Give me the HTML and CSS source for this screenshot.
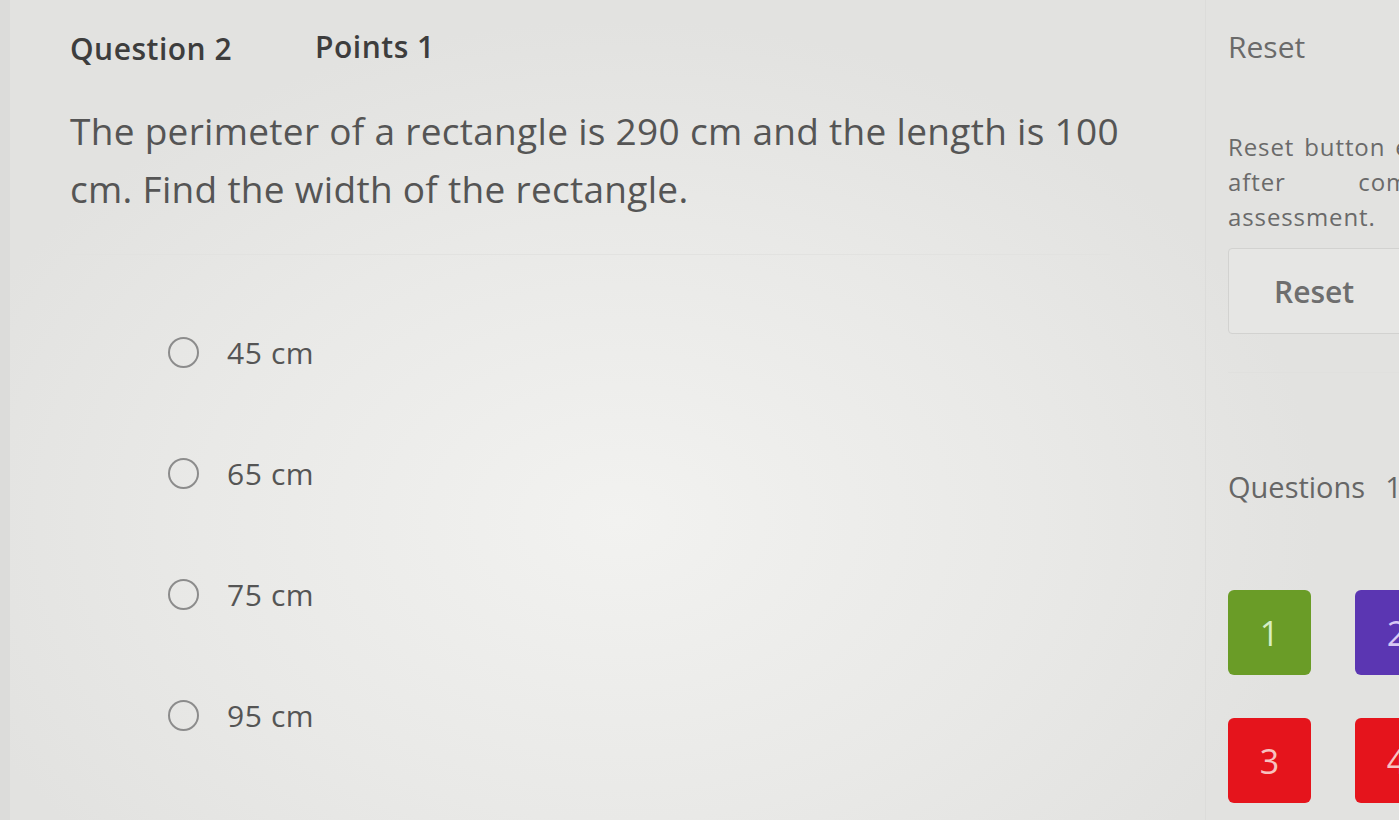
FILE: index.html
```html
<!DOCTYPE html>
<html>
<head>
<meta charset="utf-8">
<link rel="stylesheet" href="styles.css">
</head>
<body>
<div class="page">
  <main class="main">
    <div class="qhead">
      <span class="qnum">Question 2</span>
      <span class="qpts">Points 1</span>
    </div>
    <p class="qtext">The perimeter of a rectangle is 290 cm and the length is 100 cm. Find the width of the rectangle.</p>
    <div class="sep"></div>
    <ul class="options">
      <li class="opt"><span class="radio"></span><span class="label">45 cm</span></li>
      <li class="opt"><span class="radio"></span><span class="label">65 cm</span></li>
      <li class="opt"><span class="radio"></span><span class="label">75 cm</span></li>
      <li class="opt"><span class="radio"></span><span class="label">95 cm</span></li>
    </ul>
  </main>
  <aside class="side">
    <div class="side-title">Reset</div>
    <p class="side-note">Reset button enabled after completing assessment.</p>
    <button class="reset-btn">Reset</button>
    <div class="side-sep"></div>
    <div class="q-title"><span>Questions</span><span>1-4</span></div>
    <div class="tiles">
      <div class="tile green">1</div>
      <div class="tile purple">2</div>
      <div class="tile red">3</div>
      <div class="tile red">4</div>
    </div>
  </aside>
</div>
</body>
</html>
```

FILE: styles.css
```css
html, body {
  margin: 0;
  padding: 0;
  width: 1399px;
  height: 820px;
  overflow: hidden;
}
body {
  font-family: "Open Sans", "Noto Sans", sans-serif;
  background: radial-gradient(ellipse 700px 500px at 620px 520px, #f2f2f0 0%, #e9e9e7 60%, #e2e2e0 100%);
  color: #555;
}
.page {
  display: grid;
  grid-template-columns: 1195px 300px;
  height: 820px;
  border-left: 10px solid #dcdcda;
  box-sizing: border-box;
}
.main {
  padding: 26px 0 0 60px;
}
.qhead {
  display: flex;
  gap: 83px;
  align-items: flex-start;
  line-height: 41px;
}
.qnum {
  font-size: 30px;
  font-weight: 600;
  letter-spacing: 0.5px;
  color: #3d3d3d;
  padding-top: 2px;
}
.qpts {
  font-size: 30px;
  font-weight: 600;
  letter-spacing: 0.5px;
  color: #3d3d3d;
}
.qtext {
  margin: 33px 0 0 0;
  width: 1110px;
  font-size: 37px;
  letter-spacing: 0.3px;
  line-height: 58px;
  color: #555;
}
.sep {
  margin-top: 36px;
  width: 1040px;
  height: 1px;
  background: #e2e2e0;
}
.options {
  list-style: none;
  margin: 78px 0 0 0;
  padding: 0 0 0 98px;
  display: flex;
  flex-direction: column;
  gap: 83px;
}
.opt {
  display: flex;
  align-items: center;
  height: 38px;
}
.radio {
  width: 31px;
  height: 31px;
  border: 2px solid #8c8c8c;
  border-radius: 50%;
  box-sizing: border-box;
  margin-right: 28px;
}
.label {
  font-size: 30px;
  letter-spacing: 0.6px;
  color: #555;
}
.side {
  border-left: 1px solid #dcdcda;
  padding: 26px 0 0 22px;
  overflow: hidden;
}
.side-title {
  font-size: 30px;
  line-height: 41px;
  color: #6a6a6a;
}
.side-note {
  margin: 62px 0 0 0;
  width: 264px;
  font-size: 24px;
  line-height: 35px;
  text-align: justify;
  color: #6a6a6a;
  letter-spacing: 0.9px;
}
.reset-btn {
  display: block;
  margin-top: 14px;
  width: 200px;
  height: 86px;
  background: #e6e6e4;
  border: 1px solid #d2d2d0;
  border-radius: 4px;
  font-family: "Open Sans", sans-serif;
  font-size: 30px;
  font-weight: 600;
  color: #6e6e6e;
  text-align: left;
  padding-left: 45px;
}
.side-sep {
  margin-top: 38px;
  height: 1px;
  background: #e0e0de;
}
.q-title {
  margin-top: 94px;
  display: flex;
  gap: 20px;
  font-size: 29px;
  line-height: 40px;
  color: #666;
  white-space: nowrap;
}
.tiles {
  margin-top: 83px;
  display: grid;
  grid-template-columns: 83px 83px;
  column-gap: 44px;
  row-gap: 43px;
}
.tile {
  height: 85px;
  border-radius: 6px;
  display: flex;
  align-items: center;
  justify-content: center;
  font-size: 34px;
}
.green { background: #6a9c27; color: #d6eec4; }
.purple { background: #5b36b2; color: #d7c8f4; }
.red { background: #e5141c; color: #f7c2c0; }
```
